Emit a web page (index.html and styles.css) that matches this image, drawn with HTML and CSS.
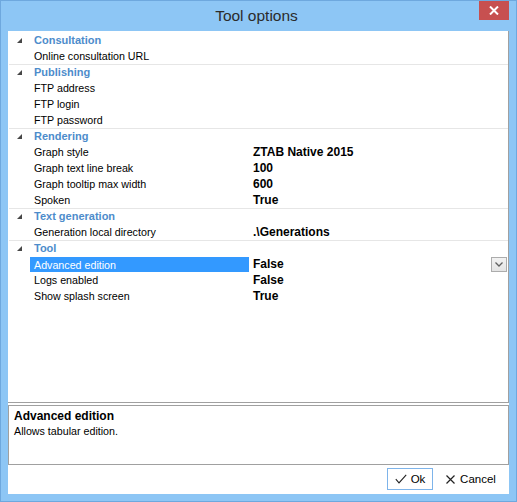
FILE: index.html
```html
<!DOCTYPE html>
<html>
<head>
<meta charset="utf-8">
<title>Tool options</title>
<link rel="stylesheet" href="styles.css">
</head>
<body>
<div class="window">
  <div class="titlebar">
    <span class="title">Tool options</span>
    <div class="close"><svg width="10" height="9" viewBox="0 0 10 9"><path d="M1 0.5 L9 8.5 M9 0.5 L1 8.5" stroke="#fff" stroke-width="2"/></svg></div>
  </div>
  <div class="client">
    <div class="grid">
      <div class="row cat first"><span class="margin"><i class="tri"></i></span><span class="catname">Consultation</span></div>
      <div class="row"><span class="margin"></span><span class="name">Online consultation URL</span><span class="value"></span></div>

      <div class="row cat"><span class="margin"><i class="tri"></i></span><span class="catname">Publishing</span></div>
      <div class="row"><span class="margin"></span><span class="name">FTP address</span><span class="value"></span></div>
      <div class="row"><span class="margin"></span><span class="name">FTP login</span><span class="value"></span></div>
      <div class="row"><span class="margin"></span><span class="name">FTP password</span><span class="value"></span></div>

      <div class="row cat"><span class="margin"><i class="tri"></i></span><span class="catname">Rendering</span></div>
      <div class="row"><span class="margin"></span><span class="name">Graph style</span><span class="value">ZTAB Native 2015</span></div>
      <div class="row"><span class="margin"></span><span class="name">Graph text line break</span><span class="value">100</span></div>
      <div class="row"><span class="margin"></span><span class="name">Graph tooltip max width</span><span class="value">600</span></div>
      <div class="row"><span class="margin"></span><span class="name">Spoken</span><span class="value">True</span></div>

      <div class="row cat"><span class="margin"><i class="tri"></i></span><span class="catname">Text generation</span></div>
      <div class="row"><span class="margin"></span><span class="name">Generation local directory</span><span class="value">.\Generations</span></div>

      <div class="row cat"><span class="margin"><i class="tri"></i></span><span class="catname">Tool</span></div>
      <div class="row selected"><span class="margin"></span><span class="name"><span class="hl">Advanced edition</span></span><span class="value"><span>False</span><span class="drop"><svg width="8" height="5" viewBox="0 0 8 5"><path d="M0.5 0.5 L4 4 L7.5 0.5" fill="none" stroke="#606060" stroke-width="1.3"/></svg></span></span></div>
      <div class="row"><span class="margin"></span><span class="name">Logs enabled</span><span class="value">False</span></div>
      <div class="row"><span class="margin"></span><span class="name">Show splash screen</span><span class="value">True</span></div>
    </div>
    <div class="help">
      <div class="help-title">Advanced edition</div>
      <div class="help-desc">Allows tabular edition.</div>
    </div>
    <div class="footer">
      <button class="btn ok"><svg width="12" height="10" viewBox="0 0 12 10"><path d="M0.8 5.2 L4 8.8 L11.2 0.8" fill="none" stroke="#222" stroke-width="1.1"/></svg><span>Ok</span></button>
      <button class="btn cancel"><svg width="9" height="9" viewBox="0 0 9 9"><path d="M0.5 0.5 L8.5 8.5 M8.5 0.5 L0.5 8.5" stroke="#222" stroke-width="1.2"/></svg><span>Cancel</span></button>
    </div>
  </div>
</div>
</body>
</html>
```

FILE: styles.css
```css
html, body {
  margin: 0;
  padding: 0;
  background: #ffffff;
}
body {
  font-family: "Liberation Sans", Arial, sans-serif;
  font-size: 10.7px;
  color: #000;
}
.window {
  position: relative;
  width: 517px;
  height: 502px;
  box-sizing: border-box;
  background: #8dc6f5;
  border: 1px solid #6ea8de;
  display: flex;
  flex-direction: column;
}
.titlebar {
  height: 30px;
  display: flex;
  align-items: center;
  justify-content: center;
  flex: none;
}
.title {
  font-size: 15.5px;
  color: #2b2b2b;
  margin-top: 0;
  margin-left: -4px;
}
.close {
  position: absolute;
  top: 0;
  right: 7px;
  width: 30px;
  height: 19px;
  background: #c75050;
  display: flex;
  align-items: center;
  justify-content: center;
}
.client {
  margin: 0 7px 0 7px;
  height: 463px;
  background: #fff;
  display: flex;
  flex-direction: column;
}
.grid {
  height: 372px;
  box-sizing: border-box;
  padding-top: 1px;
  border-right: 1px solid #a0a0a0;
  border-bottom: 1px solid #a0a0a0;
  flex: none;
}
.row {
  height: 16px;
  box-sizing: border-box;
  padding-top: 1px;
  display: grid;
  grid-template-columns: 22px 219px 1fr;
  align-items: center;
  line-height: 15px;
}
.row.cat {
  border-top: 1px solid #e6e6e6;
  padding-top: 0;
  margin-left: 1px;
  grid-template-columns: 21px 1fr;
}
.row.cat.first {
  border-top: 0;
  padding-top: 1px;
}
.margin {
  height: 100%;
  position: relative;
}
.tri {
  position: absolute;
  left: 9px;
  top: 50%;
  margin-top: -3px;
  width: 0;
  height: 0;
  border-left: 5px solid transparent;
  border-bottom: 5px solid #474747;
}
.row.cat .tri {
  left: 8px;
}
.catname {
  padding-left: 4px;
  font-weight: bold;
  font-size: 11px;
  color: #4d8ccb;
  white-space: nowrap;
}
.name {
  padding-left: 4px;
  white-space: nowrap;
}
.value {
  padding-left: 4px;
  font-weight: bold;
  font-size: 12px;
  white-space: nowrap;
}
.row.selected {
  padding-top: 0;
}
.row.selected .name {
  padding-left: 0;
  height: 16px;
  display: flex;
  flex-direction: column;
  justify-content: flex-end;
}
.hl {
  display: block;
  height: 15px;
  width: 219px;
  box-sizing: border-box;
  padding-left: 4px;
  background: #3399ff;
  color: #fff;
  line-height: 16px;
}
.row.selected .value {
  display: flex;
  justify-content: space-between;
  align-items: center;
  padding-right: 1px;
  height: 16px;
  line-height: 17px;
}
.drop {
  width: 16px;
  height: 15px;
  box-sizing: border-box;
  margin-top: 1px;
  border: 1px solid #acacac;
  background: linear-gradient(#f2f2f2, #e4e4e4);
  display: flex;
  align-items: center;
  justify-content: center;
}
.help {
  margin-top: 2px;
  height: 60px;
  box-sizing: border-box;
  border: 1px solid #a0a0a0;
  padding: 3px 0 0 5px;
  flex: none;
}
.help-title {
  font-weight: bold;
  font-size: 12px;
  line-height: 14px;
}
.help-desc {
  line-height: 16px;
}
.footer {
  flex: 1;
  display: flex;
  justify-content: flex-end;
  align-items: flex-start;
  padding: 3px 8px 0 0;
  gap: 8px;
}
.btn {
  height: 22px;
  box-sizing: border-box;
  background: #fff;
  border: 1px solid transparent;
  font-family: "Liberation Sans", Arial, sans-serif;
  font-size: 11.5px;
  color: #000;
  display: flex;
  align-items: center;
  justify-content: center;
  padding: 0;
  gap: 4px;
}
.btn.ok {
  width: 46px;
  border-color: #7eb4ea;
}
.btn.cancel {
  width: 60px;
  gap: 5px;
}
```
